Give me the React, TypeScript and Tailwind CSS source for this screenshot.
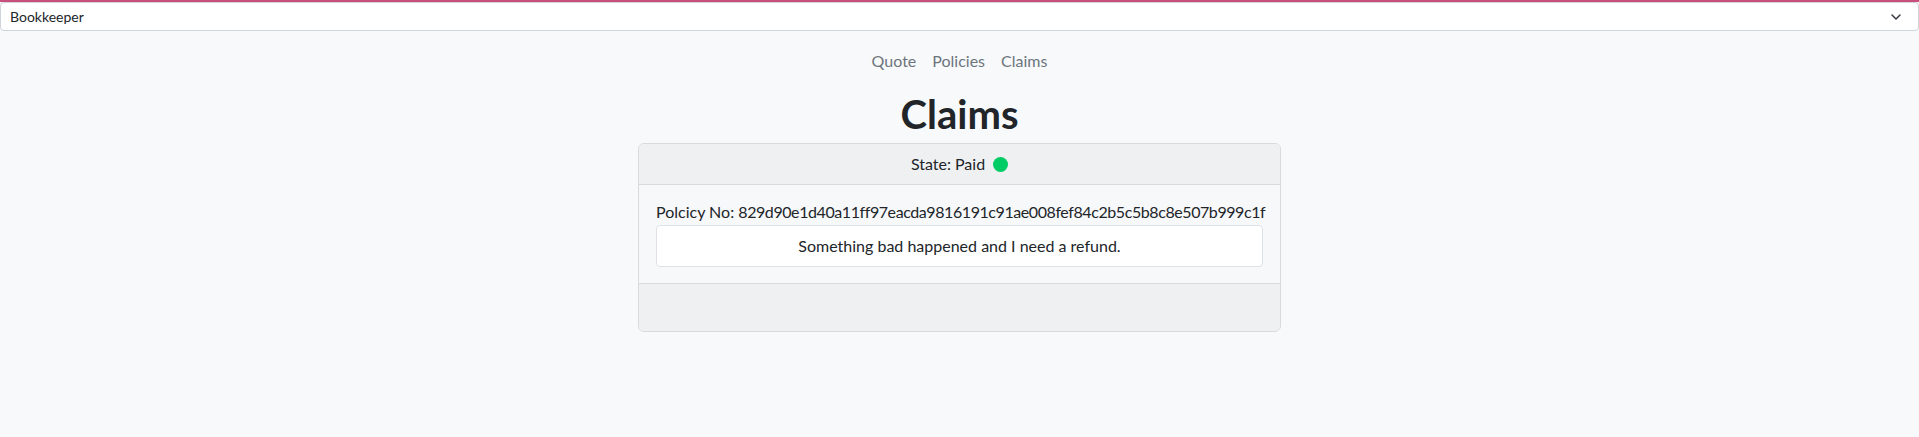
import { ChevronDown } from "lucide-react";

function TopSelect() {
  return (
    <div className="border-t-2 border-[#c94f7c]">
      <div className="flex h-[29px] items-center justify-between rounded-[4px] border border-[#ced4da] bg-white pl-[9px] pr-[14px] text-[14px] text-[#212529]">
        <span>Bookkeeper</span>
        <ChevronDown className="size-[16px] text-[#343a40]" strokeWidth={2.2} />
      </div>
    </div>
  );
}

function Nav() {
  const links = ["Quote", "Policies", "Claims"];
  return (
    <nav className="flex justify-center pt-[10px]">
      {links.map((l) => (
        <a key={l} className="px-[8px] py-[8px] text-[16px] leading-6 text-[#6c757d]">
          {l}
        </a>
      ))}
    </nav>
  );
}

function ClaimCard() {
  return (
    <div className="w-[643px] overflow-hidden rounded-[6px] border border-[#d9dadc] bg-[#f7f8fa]">
      <div className="flex h-[41px] items-center justify-center gap-[8px] border-b border-[#d9dadc] bg-[#eff0f2] text-[16px] text-[#212529]">
        <span>State: Paid</span>
        <span className="size-[15px] rounded-full bg-[#00cc66]" />
      </div>
      <div className="px-[17px] pt-[15px] pb-[16px] text-[16px] text-[#212529]">
        <p className="whitespace-nowrap leading-6">
          Polcicy No:{" "}
          <span className="tracking-[-0.42px]">
            829d90e1d40a11ff97eacda9816191c91ae008fef84c2b5c5b8c8e507b999c1f
          </span>
        </p>
        <div className="mt-[1px] rounded-[4px] border border-[#dee2e6] bg-white py-[8px] text-center leading-6">
          Something bad happened and I need a refund.
        </div>
      </div>
      <div className="h-[48px] border-t border-[#d9dadc] bg-[#eff0f2]" />
    </div>
  );
}

export default function App() {
  return (
    <div
      className="min-h-[437px] bg-[#f8f9fa] text-[#212529]"
      style={{ fontFamily: 'Lato, "Noto Sans", sans-serif' }}
    >
      <TopSelect />
      <Nav />
      <div className="flex flex-col items-center">
        <h1 className="mt-[9px] mb-[5px] text-[40px] font-bold leading-[48px]">Claims</h1>
        <ClaimCard />
      </div>
    </div>
  );
}
